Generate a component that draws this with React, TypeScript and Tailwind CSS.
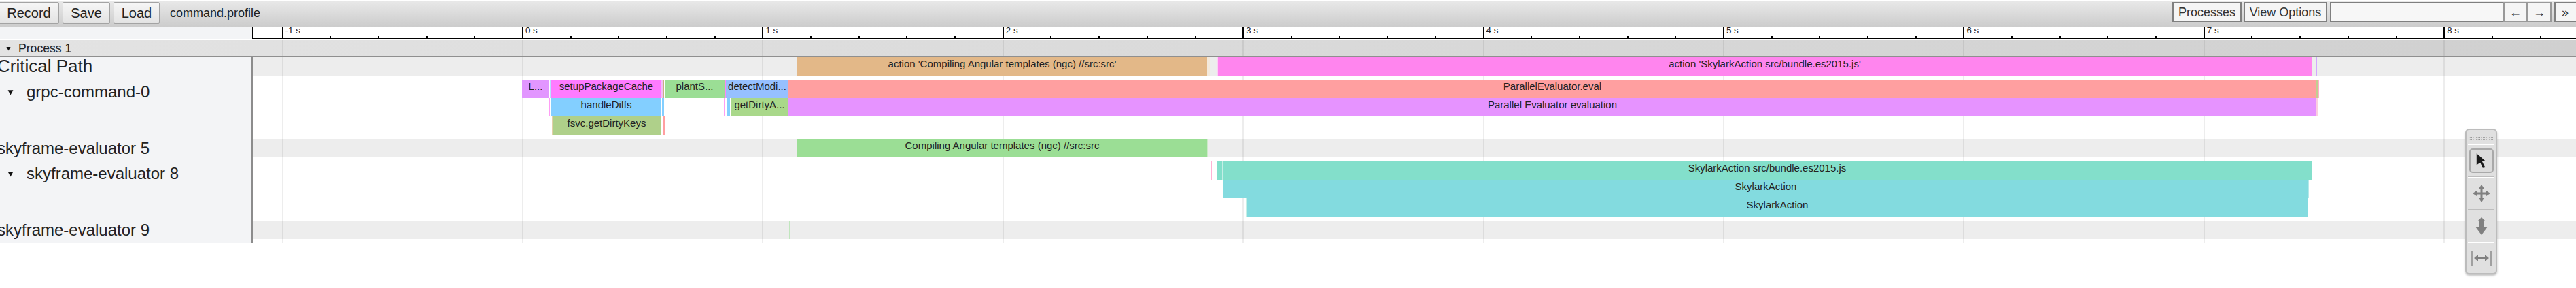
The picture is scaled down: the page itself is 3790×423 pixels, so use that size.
import type { ReactNode } from 'react'

const TRACK_X = 372
const secX = (s: number) => 768 + 353.4 * s

interface Slice {
  from: number
  to: number
  lane?: number
  color: string
  label?: string
}

const criticalSlices: Slice[] = [
  { from: 1173, to: 1776, color: 'bg-[#e3b888]', label: "action 'Compiling Angular templates (ngc) //src:src'" },
  { from: 1776, to: 1780, color: 'bg-[#f3e9dc]' },
  { from: 1781, to: 1782, color: 'bg-[#f5b08a]' },
  { from: 1791, to: 1792, color: 'bg-[#fbd0f5]' },
  { from: 1792, to: 3401, color: 'bg-[#ff85ee]', label: "action 'SkylarkAction src/bundle.es2015.js'" },
  { from: 3408, to: 3409, color: 'bg-[#d3a8ff]' },
]

const grpcSlices: Slice[] = [
  { from: 768, to: 808, color: 'bg-[#e296ff]', label: 'L...' },
  { from: 809, to: 811, color: 'bg-[#b9e0ff]' },
  { from: 811, to: 973, color: 'bg-[#ff7bff]', label: 'setupPackageCache' },
  { from: 973, to: 975, color: 'bg-[#f0c0f5]' },
  { from: 975, to: 977, color: 'bg-[#c9b083]' },
  { from: 978, to: 1066, color: 'bg-[#9bde95]', label: 'plantS...' },
  { from: 1066, to: 1068, color: 'bg-[#ff85f5]' },
  { from: 1068, to: 1160, color: 'bg-[#96c0ff]', label: 'detectModi...' },
  { from: 1160, to: 3408, color: 'bg-[#ff9fa0]', label: 'ParallelEvaluator.eval' },
  { from: 3408, to: 3410, color: 'bg-[#c0cf90]' },
  { from: 3410, to: 3412, color: 'bg-[#ffb0c8]' },
  { from: 808, to: 809, lane: 1, color: 'bg-[#ff9df5]' },
  { from: 811, to: 973, lane: 1, color: 'bg-[#83cfff]', label: 'handleDiffs' },
  { from: 974, to: 977, lane: 1, color: 'bg-[#83cfff]' },
  { from: 1065, to: 1066, lane: 1, color: 'bg-[#ff9df5]' },
  { from: 1069, to: 1074, lane: 1, color: 'bg-[#83cfff]' },
  { from: 1075, to: 1160, lane: 1, color: 'bg-[#a9d88a]', label: 'getDirtyA...' },
  { from: 1160, to: 3408, lane: 1, color: 'bg-[#e693ff]', label: 'Parallel Evaluator evaluation' },
  { from: 3408, to: 3410, lane: 1, color: 'bg-[#fbcfe0]' },
  { from: 812, to: 813, lane: 2, color: 'bg-[#e3cfa8]' },
  { from: 813, to: 972, lane: 2, color: 'bg-[#afd08a]', label: 'fsvc.getDirtyKeys' },
  { from: 975, to: 978, lane: 2, color: 'bg-[#ff9fa0]' },
]

const evaluator5Slices: Slice[] = [
  { from: 1173, to: 1776, color: 'bg-[#9bde95]', label: 'Compiling Angular templates (ngc) //src:src' },
  { from: 1776, to: 1777, color: 'bg-[#cdeac9]' },
]

const evaluator8Slices: Slice[] = [
  { from: 1781, to: 1783, color: 'bg-[#ffb3d5]' },
  { from: 1791, to: 1798, color: 'bg-[#83dfcb]' },
  { from: 1798, to: 1799, color: 'bg-[#c5efe6]' },
  { from: 1799, to: 3401, color: 'bg-[#83dfcb]', label: 'SkylarkAction src/bundle.es2015.js' },
  { from: 1800, to: 3396, lane: 1, color: 'bg-[#83dbdf]', label: 'SkylarkAction' },
  { from: 3396, to: 3397, lane: 1, color: 'bg-[#b5e8ea]' },
  { from: 1833, to: 1834, lane: 2, color: 'bg-[#c5efe6]' },
  { from: 1834, to: 3396, lane: 2, color: 'bg-[#83dbdf]', label: 'SkylarkAction' },
]

const evaluator9Slices: Slice[] = [{ from: 1161, to: 1163, color: 'bg-[#c0e6bd]' }]

const seconds = [-1, 0, 1, 2, 3, 4, 5, 6, 7, 8]
// four small ticks between each pair of second marks
const minorTicks = seconds.flatMap((s) => [0.2, 0.4, 0.6, 0.8].map((f) => s + f))

function GridLines() {
  return (
    <>
      {seconds.map((s) => (
        <div
          key={s}
          className="absolute inset-y-0 w-[2px] bg-black/[0.07]"
          style={{ left: secX(s) - TRACK_X }}
        />
      ))}
    </>
  )
}

function Slices({ slices }: { slices: Slice[] }) {
  return (
    <>
      {slices.map((slice, i) => (
        <div
          key={i}
          className={`absolute h-[27px] overflow-hidden text-center text-[15px] leading-[20px] whitespace-nowrap text-[#222] ${slice.color}`}
          style={{ left: slice.from - TRACK_X, width: slice.to - slice.from, top: (slice.lane ?? 0) * 27 }}
        >
          {slice.label}
        </div>
      ))}
    </>
  )
}

function Caret({ className }: { className: string }) {
  return (
    <svg viewBox="0 0 8 8" className={className}>
      <polygon points="0.5,1 7.5,1 4,7.5" fill="#111" />
    </svg>
  )
}

function TraceRow({
  label,
  slices,
  lanes,
  striped,
  labelSize = 'text-[24px]',
}: {
  label: string
  slices: Slice[]
  lanes?: number
  striped?: boolean
  labelSize?: string
}) {
  const expanded = lanes !== undefined
  return (
    <div className="flex">
      <div className="flex w-[372px] shrink-0 items-start overflow-hidden border-r-2 border-[#8c8c8c] bg-[#f3f4f6] text-[#222]">
        {expanded ? (
          <div className="flex items-center pt-[8px] pl-[11px] text-[24px] leading-[32px]">
            <Caret className="mr-[19px] h-[9px] w-[9px]" />
            <span className="whitespace-nowrap">{label}</span>
          </div>
        ) : (
          <span className={`-ml-[4px] whitespace-nowrap leading-[27px] ${labelSize}`}>{label}</span>
        )}
      </div>
      <div className={`relative flex-1 ${striped ? 'bg-[#ededed]' : 'bg-white'} ${expanded ? 'h-[93px]' : 'h-[27px]'}`}>
        <GridLines />
        <div className={`absolute inset-x-0 ${expanded ? 'top-[6px]' : 'top-0'}`}>
          <Slices slices={slices} />
        </div>
      </div>
    </div>
  )
}

function ToolButton({ children, className }: { children: ReactNode; className: string }) {
  return (
    <button
      type="button"
      className={`h-[32px] rounded-[2px] border border-[#a3a3a3] bg-gradient-to-b from-[#f6f6f6] to-[#e3e3e3] text-[20px] leading-none text-[#222] ${className}`}
    >
      {children}
    </button>
  )
}

function OutlineButton({ children, className }: { children: ReactNode; className: string }) {
  return (
    <button
      type="button"
      className={`h-[30px] border-2 border-[#7f7f7f] bg-[#f5f5f5] text-[18px] leading-none text-[#333] ${className}`}
    >
      {children}
    </button>
  )
}

function PaletteDivider() {
  return <div className="mx-[2px] h-[2px] shrink-0 border-t border-[#bdbdbd] bg-white" />
}

function ToolPalette() {
  return (
    <div className="absolute top-[189px] left-[3627px] flex h-[214px] w-[47px] flex-col rounded-[6px] border-2 border-[#bcbcbc] bg-[#e0e0e0] shadow-[0_2px_3px_rgba(0,0,0,0.25)]">
      <div className="flex h-[20px] shrink-0 items-center justify-center">
        <div className="h-[9px] w-[35px] bg-[radial-gradient(#8f8f8f_0.6px,transparent_0.7px)] bg-[length:2.4px_3px]" />
      </div>
      <PaletteDivider />
      <div className="flex h-[46px] shrink-0 items-center justify-center">
        <div className="flex h-[36px] w-[36px] items-center justify-center rounded-[5px] border-2 border-[#a9a9a9] bg-[#dcdcdc]">
          <svg viewBox="0 0 20 26" className="h-[24px] w-[18px] blur-[0.4px]">
            <polygon points="2,1 17,14 11,14 16,24 12,25 8,16 2,20" fill="#1a1a1a" />
          </svg>
        </div>
      </div>
      <PaletteDivider />
      <div className="flex h-[46px] shrink-0 items-center justify-center">
        <svg viewBox="0 0 28 28" className="h-[28px] w-[28px] blur-[0.4px]">
          <path d="M14 1l4 6h-2.500v5.500H21V10l6 4-6 4v-2.500h-5.500V21H18l-4 6-4-6h2.500v-5.500H7V18l-6-4 6-4v2.500h5.500V7H10z" fill="#808080" />
        </svg>
      </div>
      <PaletteDivider />
      <div className="flex h-[46px] shrink-0 items-center justify-center">
        <svg viewBox="0 0 20 28" className="h-[28px] w-[20px] blur-[0.4px]">
          <path d="M10 1l5 5h-2v9h6l-9 12-9-12h6V6H5z" fill="#808080" />
        </svg>
      </div>
      <PaletteDivider />
      <div className="flex flex-1 items-center justify-center">
        <svg viewBox="0 0 30 24" className="h-[24px] w-[30px] blur-[0.3px]">
          <path d="M1 1v22M29 1v22" stroke="#8a8a8a" strokeWidth="1.500" fill="none" />
          <path d="M4 12l6-5v3h10V7l6 5-6 5v-3H10v3z" fill="#808080" />
        </svg>
      </div>
    </div>
  )
}

export default function App() {
  return (
    <div className="relative h-[423px] w-[3790px] overflow-hidden bg-white font-['Liberation_Sans',Arial,sans-serif]">
      {/* top bar */}
      <div className="mt-[1px] flex h-[38px] items-start bg-gradient-to-b from-[#e9e9e9] to-[#cccccc] pt-[2px]">
        <div className="-ml-[2px] flex gap-[5px]">
          <ToolButton className="w-[89px]">Record</ToolButton>
          <ToolButton className="w-[70px]">Save</ToolButton>
          <ToolButton className="w-[68px]">Load</ToolButton>
        </div>
        <span className="ml-[15px] text-[18px] leading-[32px] text-[#222]">command.profile</span>
        <div className="ml-auto flex items-start">
          <OutlineButton className="mr-[3px] w-[102px]">Processes</OutlineButton>
          <OutlineButton className="mr-[4px] w-[123px]">View Options</OutlineButton>
          <div className="h-[30px] w-[255px] border-2 border-r-0 border-[#7f7f7f] bg-[#f7f7f7]" />
          <OutlineButton className="w-[36px] border-[#999]">←</OutlineButton>
          <OutlineButton className="-ml-[1px] w-[36px] border-[#999]">→</OutlineButton>
          <OutlineButton className="-mr-[10px] ml-[4px] w-[42px] pr-[10px]">»</OutlineButton>
        </div>
      </div>

      {/* time ruler */}
      <div className="flex h-[18px]">
        <div className="w-[371px] shrink-0 bg-[#f3f4f6]" />
        <div className="relative flex-1 border-b border-l border-black bg-white">
          {seconds.map((s) => (
            <div key={s} className="absolute inset-y-0 w-[2px] bg-black" style={{ left: secX(s) - 372 }}>
              <span className="absolute top-[-2px] left-[5px] text-[13.33px] leading-[16px] whitespace-nowrap text-[#222]">
                {s} s
              </span>
            </div>
          ))}
          {minorTicks.map((s) => (
            <div key={s} className="absolute bottom-0 h-[3px] w-[2px] bg-black" style={{ left: secX(s) - 372 }} />
          ))}
        </div>
      </div>

      {/* process header */}
      <div className="relative mt-[2px] flex h-[25px] items-start border-b-2 border-[#8f8f8f] bg-gradient-to-r from-[#e3e3e3] to-[#d0d0d0] pl-[9px]">
        <Caret className="mt-[9px] h-[7px] w-[7px]" />
        <span className="ml-[11px] text-[17.6px] leading-[25px] text-[#222]">Process 1</span>
        <div className="absolute inset-y-0 right-0 left-[372px]">
          <GridLines />
        </div>
      </div>

      <TraceRow label="Critical Path" slices={criticalSlices} striped labelSize="text-[26px]" />
      <TraceRow label="grpc-command-0" slices={grpcSlices} lanes={3} />
      <TraceRow label="skyframe-evaluator 5" slices={evaluator5Slices} striped />
      <TraceRow label="skyframe-evaluator 8" slices={evaluator8Slices} lanes={3} />
      <TraceRow label="skyframe-evaluator 9" slices={evaluator9Slices} striped />

      {/* bottom padding of the track list */}
      <div className="flex h-[6px]">
        <div className="w-[372px] shrink-0 border-r-2 border-[#8c8c8c] bg-[#f3f4f6]" />
        <div className="relative flex-1">
          <GridLines />
        </div>
      </div>

      <ToolPalette />
    </div>
  )
}
